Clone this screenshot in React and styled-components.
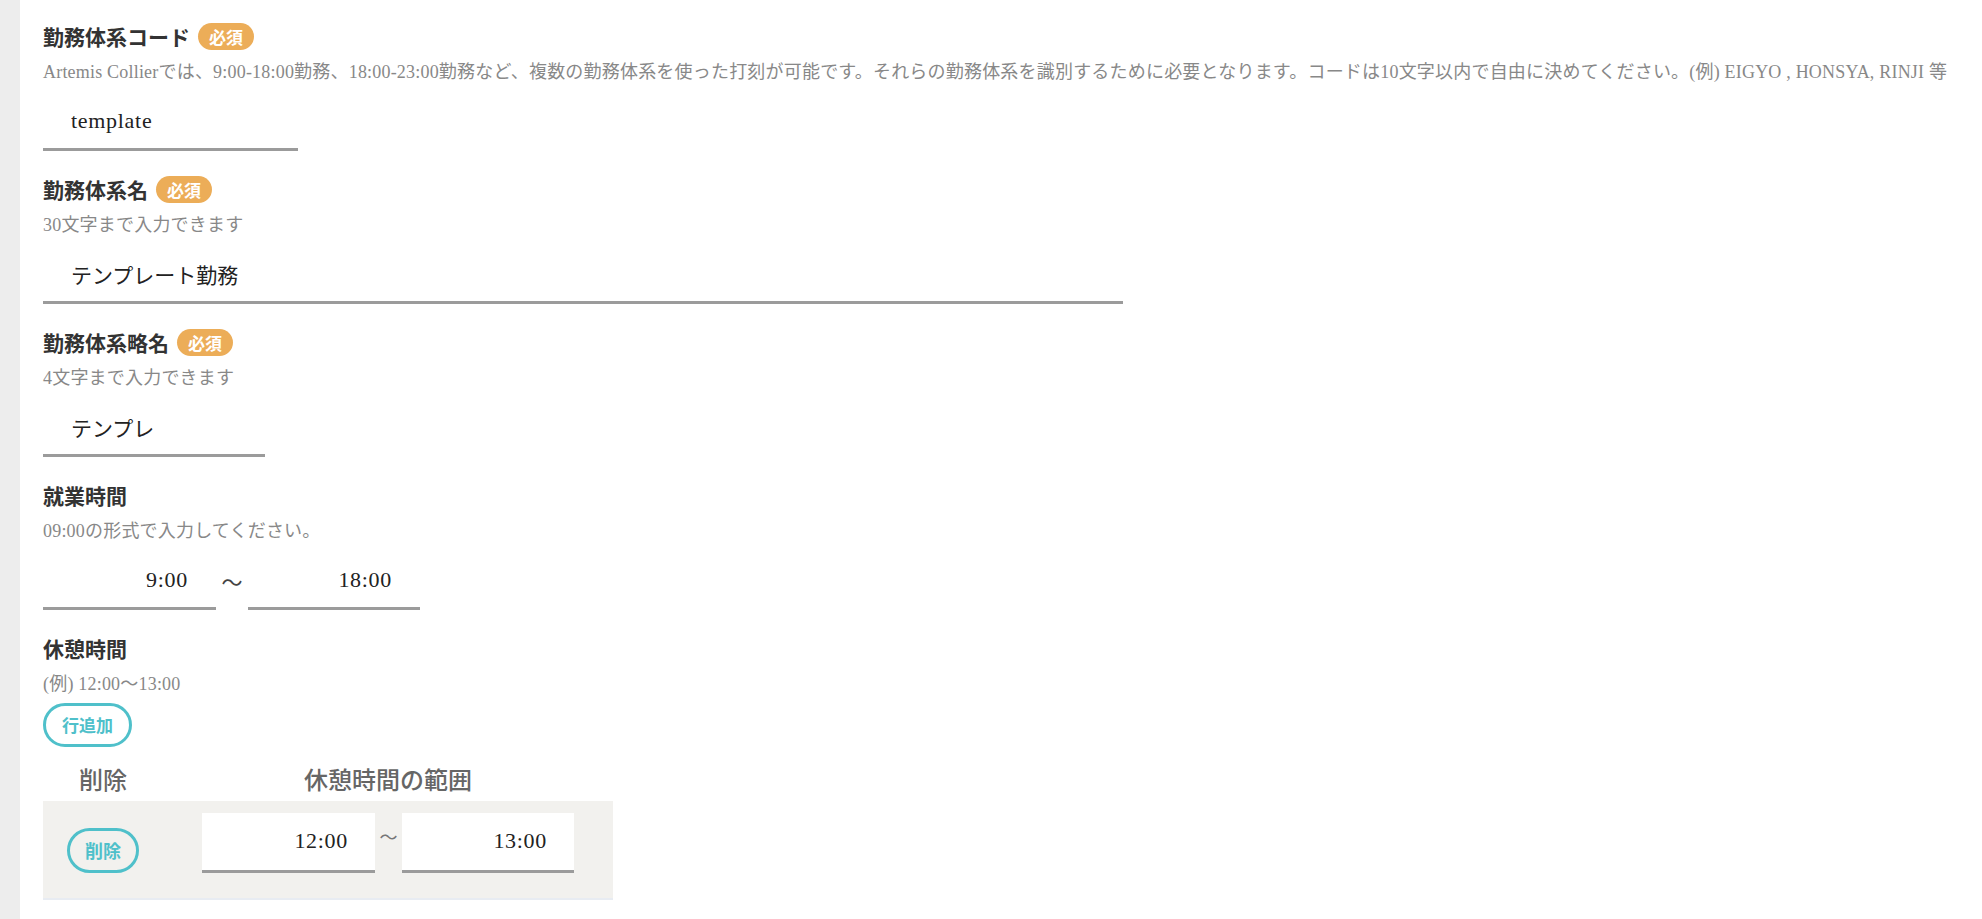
import React from "react";
import styled, { createGlobalStyle } from "styled-components";

const GlobalStyle = createGlobalStyle`
  html, body { margin: 0; padding: 0; background: #fff; }
  body {
    font-family: "Liberation Serif", "Noto Sans CJK JP", serif;
    color: #333;
  }
  * { box-sizing: border-box; }
`;

const Page = styled.div`
  display: flex;
  min-height: 919px;
`;

const SideStrip = styled.div`
  flex: none;
  width: 20px;
  background: #ededed;
`;

const Main = styled.main`
  flex: 1;
  min-width: 0;
  padding: 21px 0 0 23px;
`;

const Field = styled.section`
  display: flex;
  flex-direction: column;
  align-items: flex-start;
  & + & { margin-top: 23px; }
`;

const LabelRow = styled.div`
  display: flex;
  align-items: center;
  height: 30px;
  gap: 8px;
`;

const Label = styled.span`
  font-family: "Noto Sans CJK JP", sans-serif;
  font-size: 21px;
  font-weight: 700;
  color: #333;
  line-height: 30px;
`;

const Badge = styled.span`
  display: inline-flex;
  align-items: center;
  height: 27px;
  padding: 0 11px;
  border-radius: 14px;
  background: #ecad58;
  color: #fff;
  font-family: "Noto Sans CJK JP", sans-serif;
  font-size: 17px;
  font-weight: 700;
  line-height: 1;
`;

const Desc = styled.p`
  margin: 9px 0 0;
  font-size: 18px;
  line-height: 24px;
  letter-spacing: 0.2px;
  color: #888;
  white-space: nowrap;
`;

const TextInput = styled.input`
  display: block;
  width: ${(p) => p.$w}px;
  height: ${(p) => (p.$tall ? 60 : 53)}px;
  margin: ${(p) => (p.$flush ? 0 : "14px 0 0")};
  padding: ${(p) =>
    p.$right ? `0 ${p.$pr || 28}px ${p.$tall ? 0 : 5}px 0` : "0 0 5px 28px"};
  border: none;
  border-bottom: 3px solid #9b9b9b;
  background: ${(p) => (p.$white ? "#fff" : "transparent")};
  font-family: "Liberation Serif", "Noto Sans CJK JP", serif;
  font-size: ${(p) => (p.$latin ? 22 : 21)}px;
  letter-spacing: ${(p) => (p.$latin ? "0.7px" : "0")};
  color: #222;
  text-align: ${(p) => (p.$right ? "right" : "left")};
  outline: none;
  border-radius: 0;
`;

const TimeRow = styled.div`
  display: flex;
  align-items: flex-end;
  margin-top: 14px;
`;

const Tilde = styled.span`
  flex: none;
  width: ${(p) => p.$w}px;
  text-align: center;
  align-self: center;
  font-size: ${(p) => p.$size}px;
  color: ${(p) => p.$color};
  padding-bottom: ${(p) => p.$pb}px;
`;

const OutlineButton = styled.button`
  display: inline-flex;
  align-items: center;
  justify-content: center;
  height: ${(p) => p.$h}px;
  padding: 0 ${(p) => p.$px}px;
  border: 3px solid #4fc0ca;
  border-radius: 30px;
  background: transparent;
  color: #4fc0ca;
  font-family: "Noto Sans CJK JP", sans-serif;
  font-size: ${(p) => p.$fs || 17}px;
  font-weight: 700;
  line-height: 1;
  cursor: pointer;
`;

const AddButton = styled(OutlineButton)`
  margin-top: 6.5px;
`;

const BreakTable = styled.div`
  width: 570px;
  margin-top: 17px;
`;

const TableHead = styled.div`
  display: grid;
  grid-template-columns: 120px 450px;
  height: 30px;
  align-items: center;
`;

const HeadCell = styled.div`
  text-align: center;
  font-family: "Noto Sans CJK JP", sans-serif;
  font-size: 24px;
  font-weight: 500;
  color: #666;
  line-height: 30px;
`;

const TableRow = styled.div`
  display: grid;
  grid-template-columns: 120px 450px;
  align-items: end;
  margin-top: 7px;
  padding: 12px 0 25px;
  background: #f2f1ee;
  border-bottom: 2px solid #e8ecf2;
`;

const Cell = styled.div`
  display: flex;
  justify-content: center;
  align-items: flex-end;
`;

const fields = [
  {
    label: "勤務体系コード",
    required: true,
    desc:
      "Artemis Collierでは、9:00-18:00勤務、18:00-23:00勤務など、複数の勤務体系を使った打刻が可能です。それらの勤務体系を識別するために必要となります。コードは10文字以内で自由に決めてください。(例) EIGYO , HONSYA, RINJI 等",
    value: "template",
    width: 255,
    latin: true,
  },
  {
    label: "勤務体系名",
    required: true,
    desc: "30文字まで入力できます",
    value: "テンプレート勤務",
    width: 1080,
  },
  {
    label: "勤務体系略名",
    required: true,
    desc: "4文字まで入力できます",
    value: "テンプレ",
    width: 222,
  },
];

export default function App() {
  return (
    <>
      <GlobalStyle />
      <Page>
        <SideStrip />
        <Main>
          {fields.map((f) => (
            <Field key={f.label}>
              <LabelRow>
                <Label>{f.label}</Label>
                {f.required && <Badge>必須</Badge>}
              </LabelRow>
              <Desc>{f.desc}</Desc>
              <TextInput $w={f.width} $latin={f.latin} value={f.value} readOnly />
            </Field>
          ))}

          <Field>
            <LabelRow>
              <Label>就業時間</Label>
            </LabelRow>
            <Desc>09:00の形式で入力してください。</Desc>
            <TimeRow>
              <TextInput $w={173} $right $latin $flush value="9:00" readOnly />
              <Tilde $w={32} $size={21} $color="#444" $pb={6}>〜</Tilde>
              <TextInput $w={172} $right $latin $flush value="18:00" readOnly />
            </TimeRow>
          </Field>

          <Field>
            <LabelRow>
              <Label>休憩時間</Label>
            </LabelRow>
            <Desc>(例) 12:00〜13:00</Desc>
            <AddButton $h={44} $px={16}>行追加</AddButton>
            <BreakTable>
              <TableHead>
                <HeadCell>削除</HeadCell>
                <HeadCell>休憩時間の範囲</HeadCell>
              </TableHead>
              <TableRow>
                <Cell>
                  <OutlineButton $h={45} $px={15} $fs={18}>削除</OutlineButton>
                </Cell>
                <Cell>
                  <TextInput $w={173} $right $latin $flush $tall $white $pr={27} value="12:00" readOnly />
                  <Tilde $w={27} $size={18} $color="#777" $pb={14}>〜</Tilde>
                  <TextInput $w={172} $right $latin $flush $tall $white $pr={27} value="13:00" readOnly />
                </Cell>
              </TableRow>
            </BreakTable>
          </Field>
        </Main>
      </Page>
    </>
  );
}
